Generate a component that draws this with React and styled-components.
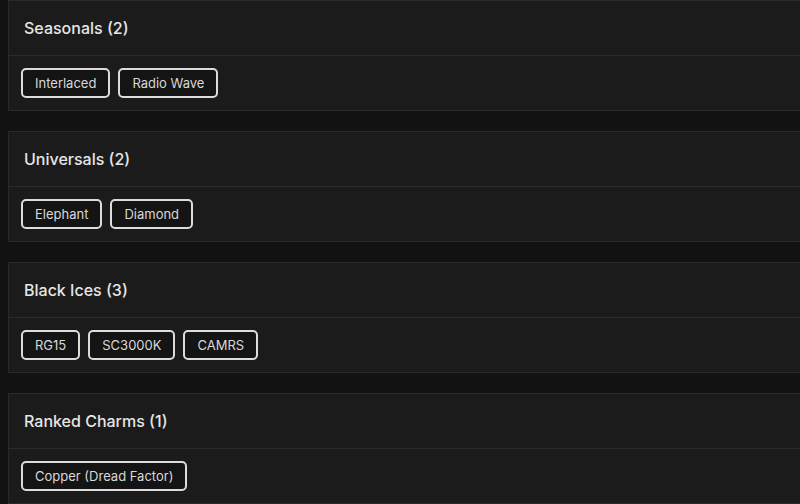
import React from "react";
import styled, { createGlobalStyle } from "styled-components";

const GlobalStyle = createGlobalStyle`
  html, body {
    margin: 0;
    padding: 0;
    background: #121212;
    font-family: "Inter", "Noto Sans", sans-serif;
    overflow: hidden;
  }
`;

const groups = [
  { title: "Seasonals", items: ["Interlaced", "Radio Wave"] },
  { title: "Universals", items: ["Elephant", "Diamond"] },
  { title: "Black Ices", items: ["RG15", "SC3000K", "CAMRS"] },
  { title: "Ranked Charms", items: ["Copper (Dread Factor)"] },
];

function App() {
  return (
    <Page>
      <GlobalStyle />
      {groups.map((g) => (
        <Card key={g.title}>
          <Header>
            <Title>
              {g.title} ({g.items.length})
            </Title>
          </Header>
          <Body>
            {g.items.map((item) => (
              <Chip key={item}>{item}</Chip>
            ))}
          </Body>
        </Card>
      ))}
    </Page>
  );
}

const Page = styled.div`
  display: flex;
  flex-direction: column;
  gap: 20px;
  padding-left: 8px;
  width: 800px;
  box-sizing: border-box;
  overflow: hidden;
`;

const Card = styled.section`
  background: #1b1b1b;
  border: 1px solid #2a2a2a;
  margin-right: -12px;
`;

const Header = styled.div`
  height: 54px;
  display: flex;
  align-items: center;
  padding: 0 15px;
  border-bottom: 1px solid #2c2c2c;
`;

const Title = styled.h3`
  margin: 0;
  font-size: 16px;
  font-weight: 500;
  color: #e6e6e6;
`;

const Body = styled.div`
  display: flex;
  gap: 8px;
  padding: 12px 12px;
`;

const Chip = styled.span`
  box-sizing: border-box;
  height: 30px;
  display: inline-flex;
  align-items: center;
  padding: 0 12px;
  border: 2px solid #dcdcdc;
  border-radius: 5px;
  background: #141414;
  color: #d8d8d8;
  font-size: 13px;
  font-weight: 400;
`;

export default App;
